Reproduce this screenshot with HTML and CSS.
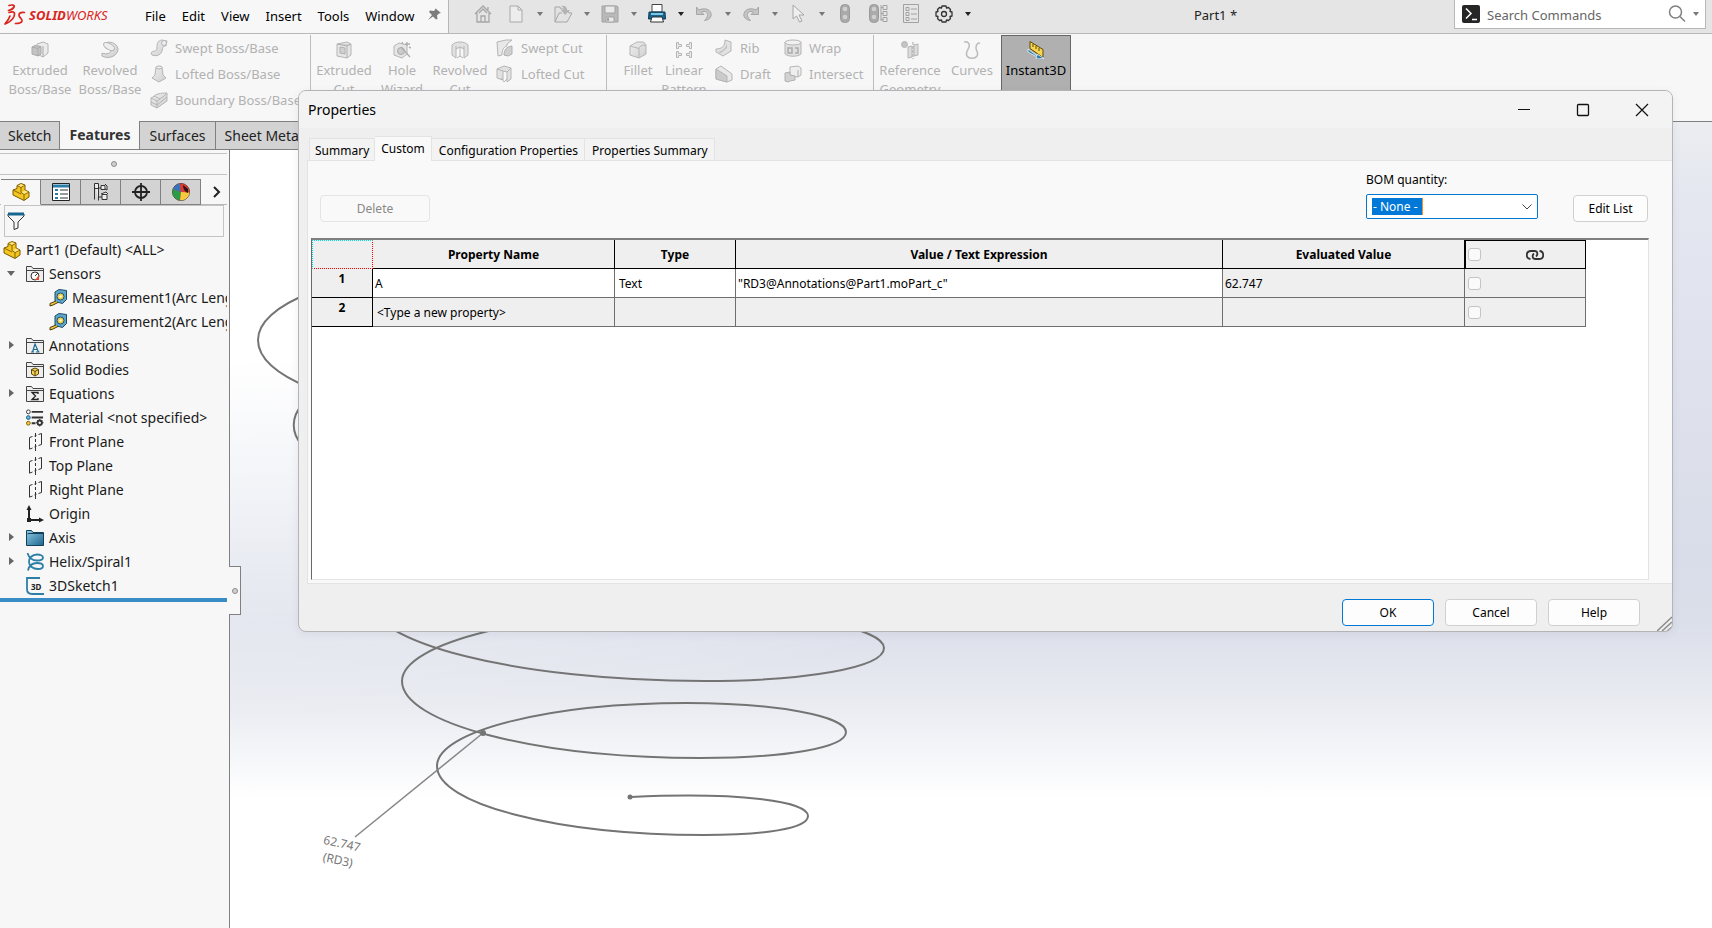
FILE: index.html
```html
<!DOCTYPE html>
<html lang="en">
<head>
<meta charset="utf-8">
<title>Part1 - SOLIDWORKS</title>
<link rel="stylesheet" href="styles.css">
</head>
<body>
<svg class="defs" aria-hidden="true">
  <defs>
    <linearGradient id="g-blue" x1="0" y1="0" x2="1" y2="1"><stop offset="0" stop-color="#8fcbe6"/><stop offset="1" stop-color="#1d658c"/></linearGradient>
    <linearGradient id="g-gray" x1="0" y1="0" x2="1" y2="1"><stop offset="0" stop-color="#efefef"/><stop offset="1" stop-color="#cfcfcf"/></linearGradient>
    <symbol id="part" viewBox="0 0 18 18"><path d="M1 7l4-1.500V2.500L9 .500l4 1.500v5l4 2v5l-5 3.500L1 12z" fill="#f3c520" stroke="#7a5a00" stroke-linejoin="round"/><path d="M5 2.500l4 2v5l3 2 5-2.500M9 4.500L13 2M12 11.500V17M1 7l8 4" fill="none" stroke="#8a6700"/><path d="M6 2.500l3-1.300 3 1-3 1.500zM10 9l3-1.500 3 1.500-4 2z" fill="#ffe68a"/></symbol>
    <symbol id="folder" viewBox="0 0 18 18"><path d="M.5 16.500v-15h5l1.500 2h10.500v13z" fill="#eee" stroke="#444"/><path d="M1 5.500h16" stroke="#444"/></symbol>
    <symbol id="tape" viewBox="0 0 18 18"><path d="M6 3l4-2.500 7.500 1v9l-4 4-7.500-2z" fill="#5ba7cb" stroke="#1c4a66"/><circle cx="11.500" cy="7.500" r="3.500" fill="#f4d04a" stroke="#234f69"/><circle cx="11.500" cy="7.500" r="1.200" fill="#fff7cf"/><path d="M7 12l-6 2.500V17l3-1 5-2.500" fill="#f1c73b" stroke="#4d3b0a"/></symbol>
    <symbol id="plane" viewBox="0 0 18 18"><path d="M3.500 16.200V4.500l3-1M8.500 3l2-.700M12.500 1.500l3-1v11l-3 1M10.500 13.200l-2 .700M6.500 15l-3 1.200" fill="none" stroke="#333"/><path d="M9.500 0v4M9.500 6v3M9.500 11v2M9.500 14v4" stroke="#333"/></symbol>
    <symbol id="box" viewBox="0 0 18 18"><path d="M1 5l7-4h6c2 1 3 2 3 4v8l-7 4-9-3z" fill="url(#g-gray)" stroke="#b5b5b5"/><path d="M1 5l9 2.500V17M10 7.500c1-3 4-4 7-3" fill="none" stroke="#b5b5b5"/></symbol>
  </defs>
</svg>

<header class="appbar">
  <div class="brand-menu">
    <div class="brand">
      <svg width="22" height="22" viewBox="0 0 22 22" fill="none" stroke="#d9261c" stroke-width="1.700" stroke-linecap="round" stroke-linejoin="round"><path d="M5 1.500c3-1 6-.500 5 1.500S6.500 6 4.500 6.500"/><path d="M5 8.500c5-1.500 6.500 0 5 4-1.500 3.500-5 6-9 7.500 2.500-3 4-5 5-8"/><path d="M20.500 8.500c-3.500-.500-6 .500-5.500 3s3.500 3 3 5.500c-.500 2-3 2.500-6.500 2.500"/></svg>
      <span class="wordmark"><b>SOLID</b>WORKS</span>
    </div>
    <nav class="menus">
      <button>File</button><button>Edit</button><button>View</button><button>Insert</button><button>Tools</button><button>Window</button>
    </nav>
    <svg width="15" height="15" viewBox="0 0 15 15"><path d="M8 1l6 5-2 .500-2 2 .500 3.500-1.500.500-3-3L1 13l4-5-3-3 1-1.500 4 .500 1.500-2z" fill="#7c7c7c"/></svg>
  </div>
  <div class="quickbar">
    <button class="solo" aria-label="Home"><svg width="18" height="18" viewBox="0 0 18 18" fill="none" stroke="#a6a6a6" stroke-width="1.300"><path d="M1 9l8-8 8 8M3 8v9h12V8M5 8l4-4 4 4M7 17v-6h4v6M14 2v3"/></svg></button>
    <button aria-label="New"><svg width="14" height="18" viewBox="0 0 14 18"><path d="M1 1h8l4 4v12H1z" fill="#ededed" stroke="#a9a9a9"/><path d="M9 1v4h4" fill="none" stroke="#a9a9a9"/></svg></button><button class="caret" aria-label="New options"></button>
    <button aria-label="Open"><svg width="19" height="18" viewBox="0 0 19 18"><path d="M1 17V2h5l1 2h3M1 17h12l5-9h-3l-1-2M1 17l4-9h3" fill="#e2e2e2" stroke="#a6a6a6"/><path d="M7 1c4-1 6 1 6 4h3l-5 5-4-5h3c0-2-1-3-3-4z" fill="#b4b4b4"/></svg></button><button class="caret" aria-label="Open options"></button>
    <button aria-label="Save"><svg width="18" height="18" viewBox="0 0 18 18"><path d="M1 1h15l1 1v15H1z" fill="#b9b9b9" stroke="#a2a2a2"/><path d="M4 1h10v7H4zM5 12h8v5H5z" fill="#e9e9e9" stroke="#a2a2a2"/><path d="M7 13v3" stroke="#a2a2a2" stroke-width="2"/></svg></button><button class="caret" aria-label="Save options"></button>
    <button aria-label="Print"><svg width="18" height="19" viewBox="0 0 18 19"><path d="M4 .500h10V8H4z" fill="#fff" stroke="#444"/><path d="M1 8h16l.500 7H.500z" fill="#17658f" stroke="#0d3c56"/><path d="M3 10h12" stroke="#9fdcf5" stroke-width="1.600"/><path d="M4 13h10l1.500 5h-13z" fill="#fff" stroke="#333"/></svg></button><button class="caret dark" aria-label="Print options"></button>
    <button aria-label="Undo"><svg width="18" height="18" viewBox="0 0 18 18"><path d="M1.500 2v7.500H9L6.500 7C10 5.500 13 7 12.500 10.500c-.300 2-1.500 3.500-3 5C14 15 17 12 16 8.500 15 4 9 2.500 4 5z" fill="#c4c4c4" stroke="#a6a6a6"/></svg></button><button class="caret" aria-label="Undo options"></button>
    <button aria-label="Redo"><svg width="18" height="18" viewBox="0 0 18 18"><path d="M16.500 2v7.500H9L11.500 7C8 5.500 5 7 5.500 10.500c.300 2 1.500 3.500 3 5C4 15 1 12 2 8.500 3 4 9 2.500 14 5z" fill="#c4c4c4" stroke="#a6a6a6"/></svg></button><button class="caret" aria-label="Redo options"></button>
    <button aria-label="Select"><svg width="13" height="19" viewBox="0 0 13 19"><path d="M1 1v14l3.500-3 3 6 2.500-1-3-6h5z" fill="#efefef" stroke="#a6a6a6"/></svg></button><button class="caret" aria-label="Select options"></button>
    <button class="solo" aria-label="Rebuild"><svg width="10" height="19" viewBox="0 0 10 19"><rect x=".500" y=".500" width="9" height="18" rx="4" fill="#aaa" stroke="#999"/><circle cx="5" cy="5" r="2.300" fill="#d0d0d0"/><circle cx="5" cy="13" r="2.300" fill="#d0d0d0"/></svg></button>
    <button class="solo" aria-label="Rebuild all"><svg width="19" height="19" viewBox="0 0 19 19"><rect x=".500" y=".500" width="9" height="18" rx="4" fill="#aaa" stroke="#999"/><circle cx="5" cy="5" r="2.300" fill="#d0d0d0"/><circle cx="5" cy="13" r="2.300" fill="#d0d0d0"/><path d="M14 1.500h4v4h-4zM14 7.500h4v4h-4zM14 13.500h4v4h-4zM12 1v16M12 3.500h2M12 9.500h2M12 15.500h2" fill="none" stroke="#a2a2a2"/></svg></button>
    <button class="solo" aria-label="File properties"><svg width="16" height="19" viewBox="0 0 16 19" fill="none" stroke="#a2a2a2"><path d="M.500.500h15v18H.500zM3 3.500h3v3H3zM3 8.500h3v3H3zM3 13.500h3v3H3zM8 5h6M8 10h6M8 15h6"/></svg></button>
    <button aria-label="Options"><svg width="18" height="18" viewBox="0 0 18 18" fill="none" stroke="#333" stroke-width="1.300"><path d="M7 1h4l.500 2 2-.500 2 2-.500 2 2 .500v4l-2 .500.500 2-2 2-2-.500L11 17H7l-.500-2-2 .500-2-2 .500-2L1 11V7l2-.500-.500-2 2-2 2 .500z" stroke-linejoin="round"/><circle cx="9" cy="9" r="2.500"/></svg></button><button class="caret dark" aria-label="More options"></button>
  </div>
  <div class="doc-title">Part1 *</div>
  <div class="search">
    <svg width="18" height="18" viewBox="0 0 18 18"><rect width="18" height="18" rx="2" fill="#262626"/><path d="M4 3.500l5 5-5 5M10 14.500h5" fill="none" stroke="#fff" stroke-width="1.500"/></svg>
    <input type="text" placeholder="Search Commands" aria-label="Search Commands">
    <svg width="18" height="18" viewBox="0 0 18 18" fill="none" stroke="#808080" stroke-width="1.500"><circle cx="7.500" cy="7" r="6"/><path d="M12 11.500l5 5"/></svg>
    <button class="caret" aria-label="Search options"></button>
  </div>
</header>

<section class="ribbon">
  <div class="group">
    <button class="big"><svg width="18" height="18" viewBox="0 0 18 18"><path d="M6 3l6-2 5 2v9l-5 4-6-3z" fill="#ececec" stroke="#b5b5b5"/><path d="M1 6l3-1.500 6 1V13l-3 2-6-2z" fill="#c4c4c4" stroke="#aaa"/><path d="M1 6l6 1.500 3-2M7 7.500V15M12 5v11" fill="none" stroke="#aaa"/></svg><span>Extruded<br>Boss/Base</span></button>
    <button class="big"><svg width="18" height="18" viewBox="0 0 18 18"><path d="M3 3c5-4 13-1 14 5 0 6-8 11-16 7v-3c5 2 9 0 9-3z" fill="url(#g-gray)" stroke="#b0b0b0"/><ellipse cx="8" cy="5.500" rx="6" ry="3" transform="rotate(30 8 5.500)" fill="#eee" stroke="#b0b0b0"/></svg><span>Revolved<br>Boss/Base</span></button>
    <div class="stack">
      <button><svg width="18" height="18" viewBox="0 0 18 18"><path d="M1 14c2-3 6-1 6-5s0-7 5-8l5 1-1 5c-4 0-3 2-4 5s-4 6-10 4z" fill="url(#g-gray)" stroke="#b5b5b5"/><circle cx="14" cy="4" r="2.500" fill="#eee" stroke="#b5b5b5"/></svg>Swept Boss/Base</button>
      <button><svg width="18" height="18" viewBox="0 0 18 18"><path d="M6 2h6l1 8 3 3-7 4-7-4 3-3z" fill="url(#g-gray)" stroke="#b5b5b5"/><ellipse cx="9" cy="2.500" rx="3" ry="1.500" fill="#eee" stroke="#b5b5b5"/></svg>Lofted Boss/Base</button>
      <button><svg width="18" height="18" viewBox="0 0 18 18"><path d="M1 7c3-1 3-3 7-4s5-1 9-1v8l-10 7-6-3z" fill="url(#g-gray)" stroke="#b5b5b5"/><path d="M1 7l6 3c3-1 3-3 6-4l4-4M7 10v7M4 5l6 3M1 11l6 3 10-8" fill="none" stroke="#b5b5b5"/></svg>Boundary Boss/Base</button>
    </div>
  </div>
  <div class="group">
    <button class="big wide"><svg width="18" height="18" viewBox="0 0 18 18"><path d="M2 3l10-2 4 2v11l-4 3-10-2z" fill="#e6e6e6" stroke="#b5b5b5"/><path d="M12 5v12M2 3l10 2 4-2M5 6l5 1v6l-5-1z" fill="#d0d0d0" stroke="#b0b0b0"/></svg><span>Extruded<br>Cut</span></button>
    <button class="big slim"><svg width="18" height="18" viewBox="0 0 18 18"><path d="M1 5l5-3 8 2v9l-5 4-8-3z" fill="#e6e6e6" stroke="#b5b5b5"/><circle cx="8" cy="10" r="3.500" fill="#ccc" stroke="#aaa"/><path d="M17 16L8 6M14 1v4M12 3h5M16 6l2 1M9 1l1 2" stroke="#b0b0b0" stroke-width="1.400"/></svg><span>Hole<br>Wizard</span></button>
    <button class="big wide"><svg width="18" height="18" viewBox="0 0 18 18"><path d="M1 4c3-4 13-4 16 0v10l-4 3V8l-4-2-4 2v9l-4-3z" fill="#e2e2e2" stroke="#b5b5b5"/><path d="M5 8V5M13 8V5M9 6v9l3 2M9 15l-3 2" fill="none" stroke="#b5b5b5"/></svg><span>Revolved<br>Cut</span></button>
    <div class="stack">
      <button><svg width="18" height="18" viewBox="0 0 18 18"><path d="M1 3l9-2h6l-5 4v2c-4 1-5 5-5 9l-4 1z" fill="#e8e8e8" stroke="#b5b5b5"/><path d="M8 16c0-5 2-8 8-9v8l-4 2z" fill="#cfcfcf" stroke="#b0b0b0"/></svg>Swept Cut</button>
      <button><svg width="18" height="18" viewBox="0 0 18 18"><path d="M1 4l7-3 7 2v11l-4 3V7L7 6v9l-6-2z" fill="#e2e2e2" stroke="#b5b5b5"/><path d="M7 6l-6-2M11 7l4-4M5 13l3 4 3-3" fill="none" stroke="#b5b5b5"/></svg>Lofted Cut</button>
    </div>
  </div>
  <div class="group">
    <button class="big slim"><svg width="18" height="18"><use href="#box"/></svg><span>Fillet</span></button>
    <button class="big mini"><svg width="18" height="18" viewBox="0 0 18 18" fill="#ececec" stroke="#b5b5b5"><path d="M1.500 1.500h2v2h3v2h-3v2h-2zM16.500 1.500h-2v2h-3v2h3v2h2zM1.500 10.500h2v2h3v2h-3v2h-2zM16.500 10.500h-2v2h-3v2h3v2h2z"/></svg><span>Linear<br>Pattern</span></button>
    <div class="stack short">
      <button><svg width="18" height="18" viewBox="0 0 18 18"><path d="M10 1l6 2v9l-8 5-7-4v-3c6 0 9-3 9-9z" fill="#e2e2e2" stroke="#b5b5b5"/><path d="M12 4v5l-6 5-3-1c5-1 8-4 9-9z" fill="#bebebe"/></svg>Rib</button>
      <button><svg width="18" height="18" viewBox="0 0 18 18"><path d="M1 4l5-3 11 8v6l-5 2-11-3z" fill="#e8e8e8" stroke="#b5b5b5"/><path d="M1 4l11 7v6L1 14z" fill="#cbcbcb" stroke="#b5b5b5"/></svg>Draft</button>
    </div>
    <div class="stack">
      <button><svg width="18" height="18" viewBox="0 0 18 18"><path d="M1 3v12c3 3 13 3 16 0V3z" fill="#e0e0e0" stroke="#b5b5b5"/><ellipse cx="9" cy="3.500" rx="8" ry="2.500" fill="#f0f0f0" stroke="#b5b5b5"/><path d="M4 9h4v5H4zM11 9h3v5h-3" fill="none" stroke="#aaa" stroke-width="1.500"/></svg>Wrap</button>
      <button><svg width="18" height="18" viewBox="0 0 18 18"><path d="M6 2l8-1 3 2v7l-3 2-8-1z" fill="#eee" stroke="#b5b5b5"/><path d="M1 8l5-1v3l5 1v4l-5 1-2 1-3-1zM14 5v7" fill="#d2d2d2" stroke="#b0b0b0"/></svg>Intersect</button>
    </div>
  </div>
  <div class="group">
    <button class="big"><svg width="18" height="18" viewBox="0 0 18 18"><circle cx="3.500" cy="3.500" r="3" fill="#c4c4c4" stroke="#b5b5b5"/><path d="M7 6l4-1v11l-4 1zM13 4l4-1v11l-4 1z" fill="#dcdcdc" stroke="#b5b5b5"/><path d="M12 1v17" stroke="#a5a5a5" stroke-dasharray="3 1"/></svg><span>Reference<br>Geometry</span></button>
    <button class="big slim"><svg width="18" height="18" viewBox="0 0 18 18" fill="none" stroke="#bcbcbc" stroke-width="1.500"><path d="M1 1c4-1 6 2 5 5s-4 6-2 9 8 3 10 0-1-5-1-8 1-5 4-5"/></svg><span>Curves</span></button>
  </div>
  <button class="big pressed"><svg width="18" height="18" viewBox="0 0 18 18"><path d="M3 .500l13 8v8l-13-9z" fill="#f8d64e" stroke="#5b470a"/><path d="M6 3v3M9 5v3M12 7v3" stroke="#5b470a"/><path d="M1 8l9 7v-2l7 4.500-8 .500 1-2-9-5z" fill="#2c7aa6" stroke="#e8f4fa" stroke-width=".800"/></svg><span>Instant3D</span></button>
</section>

<main class="workspace">
  <svg class="model" width="1482" height="806" viewBox="230 122 1482 806" fill="none">
    <g stroke="#747474" stroke-width="2">
      <path d="M310 293C276 306 258 323 258 340C258 358 276 374 310 388"/>
      <path d="M302 405C291 417 291 433 302 445"/>
      <path d="M367 597C367 643 518 681 704 681C804 681 884 668 884 648C884 628 792 611 687 611C530 611 402 643 402 681C402 723 535 758 700 758C784 758 846 748 846 732C846 716 775 703 687 703C550 703 437 731 437 766C437 804 557 835 704 835C762 835 808 829 808 816C808 801 739 792 631 797"/>
    </g>
    <path d="M483 733L355 837" stroke="#858585" stroke-width="1.500"/>
    <circle cx="483" cy="733" r="3" fill="#747474"/><circle cx="630" cy="797" r="2.500" fill="#747474"/>
    <g class="dimension" transform="rotate(12 324 843)"><text x="323" y="844">62.747</text><text x="326" y="861">(RD3)</text></g>
  </svg>
  <div class="left-column">
    <nav class="cm-tabs">
      <button>Sketch</button><button class="current">Features</button><button>Surfaces</button><button>Sheet Metal</button>
    </nav>
    <aside class="manager">
      <div class="splitter"><i class="dot"></i></div>
      <div class="manager-tabs">
        <button class="current" aria-label="Feature tree"><svg width="18" height="18"><use href="#part"/></svg></button>
        <button aria-label="Property manager"><svg width="18" height="18" viewBox="0 0 18 18"><path d="M.500.500h17v17H.500z" fill="#fff" stroke="#222"/><path d="M1 3h16" stroke="#2a7da8" stroke-width="3"/><path d="M3 6h3v2H3zM3 10h3v2H3zM3 14h3v2H3z" fill="#2a7da8"/><path d="M8 7h8M8 11h8M8 15h8" stroke="#333"/></svg></button>
        <button aria-label="Configurations"><svg width="16" height="18" viewBox="0 0 16 18" fill="#eee" stroke="#333"><path d="M1.500.500h4v17M1.500.500v16M1 5.500h4M5 5h3M5 14h4M8 2.500h4v4H8zM9 11.500h5v5H9zM12 1l2 2v4l-2-1M8 11l5-2 2 2"/></svg></button>
        <button aria-label="Dimensions"><svg width="18" height="18" viewBox="0 0 18 18" fill="none" stroke="#222" stroke-width="1.800"><circle cx="9" cy="9" r="6"/><path d="M9 0v18M0 9h18"/></svg></button>
        <button aria-label="Appearances"><svg width="18" height="18" viewBox="0 0 18 18"><circle cx="9" cy="9" r="8.500" fill="#e2392b" stroke="#444"/><path d="M9 9L1 6c-2 6 2 11 7 11z" fill="#2e9b46"/><path d="M9 9l-1 8.500c5 0 9-3 9.500-8z" fill="#f5c93b"/><path d="M9 9L1 6C3 2 6 1 8 .500z" fill="#3675bd"/><path d="M9 9L8 .500C13 0 17 4 17.500 9z" fill="#e2392b"/><path d="M11 2l5 4v4c-3-1-5-4-5-8z" fill="#2b1717"/></svg></button>
        <button class="more" aria-label="More"><svg width="8" height="12" viewBox="0 0 8 12" fill="none" stroke="#222" stroke-width="2"><path d="M1 1l5 5-5 5"/></svg></button>
      </div>
      <div class="filter">
        <svg width="18" height="18" viewBox="0 0 18 18"><path d="M1 2h16v2l-6 6v6l-4 1.500V10L1 4z" fill="#f5f5f5" stroke="#333"/><path d="M1 2h16" stroke="#17658f" stroke-width="3"/></svg>
        <input type="text" aria-label="Filter tree">
      </div>
      <ul class="tree">
        <li class="root"><svg width="18" height="18"><use href="#part"/></svg>Part1 (Default) &lt;ALL&gt;</li>
        <li><i class="arrow open"></i><svg width="18" height="18"><use href="#folder"/><circle cx="9" cy="11" r="4" fill="#fff" stroke="#333"/><path d="M9 11l3-3" stroke="#333"/><path d="M9 15h4v-5z" fill="#e04a2a"/></svg>Sensors</li>
        <li class="child"><svg width="18" height="18"><use href="#tape"/></svg>Measurement1(Arc Length)</li>
        <li class="child"><svg width="18" height="18"><use href="#tape"/></svg>Measurement2(Arc Length)</li>
        <li><i class="arrow"></i><svg width="18" height="18"><use href="#folder"/><path d="M5 15h3M10 15h3.500M6.500 15L9 7l3.500 8M7.500 12.500h4" fill="none" stroke="#1e6a94" stroke-width="1.200"/></svg>Annotations</li>
        <li><svg width="18" height="18"><use href="#folder"/><path d="M5.500 8.500l3.500-1.500 3.500 1.500v4.500L9 15l-3.500-2z" fill="#f4cf56" stroke="#5b470a"/><path d="M5.500 8.500L9 10.500l3.500-2M9 10.500V15" fill="none" stroke="#5b470a"/></svg>Solid Bodies</li>
        <li><i class="arrow"></i><svg width="18" height="18"><use href="#folder"/><path d="M12 9V7.500H6L9.500 11 6 14.500h6V13" fill="none" stroke="#222" stroke-width="1.300"/></svg>Equations</li>
        <li><svg width="18" height="18" viewBox="0 0 19 18"><circle cx="2.500" cy="2.500" r="2" fill="#fff" stroke="#333"/><circle cx="2.500" cy="8.500" r="2" fill="#58b5df" stroke="#1c5a7c"/><circle cx="2.500" cy="14.500" r="2" fill="#f5c93b" stroke="#7d5c06"/><path d="M6 2.500h12M6 8.500h12M6 14.500h4" stroke="#333" stroke-width="2"/><circle cx="14.500" cy="14" r="2.300" fill="none" stroke="#333" stroke-width="2"/><path d="M14.500 10v8M10.500 14h8M12 11.500l5 5M17 11.500l-5 5" stroke="#333" stroke-dasharray="2 4"/></svg>Material &lt;not specified&gt;</li>
        <li><svg width="18" height="18"><use href="#plane"/></svg>Front Plane</li>
        <li><svg width="18" height="18"><use href="#plane"/></svg>Top Plane</li>
        <li><svg width="18" height="18"><use href="#plane"/></svg>Right Plane</li>
        <li><svg width="18" height="18" viewBox="0 0 18 18"><path d="M3 3v12h12" fill="none" stroke="#222" stroke-width="2"/><path d="M3 0l2.500 5h-5zM18 15l-5-2.500v5z" fill="#222"/><path d="M1 13h4v4H1z" fill="#222"/></svg>Origin</li>
        <li><i class="arrow"></i><svg width="18" height="18" viewBox="0 0 18 18"><path d="M.500 16.500v-15h5l1.500 2h10.500v13z" fill="url(#g-blue)" stroke="#123f59"/><path d="M1 5.500l1-1h15" fill="none" stroke="#123f59"/></svg>Axis</li>
        <li><i class="arrow"></i><svg width="18" height="18" viewBox="0 0 18 18" fill="none" stroke="#2d7fa8" stroke-width="1.800"><path d="M1.500 0C3 5 6 7.500 11 7.500c4 0 6-1 6-3S14 1.500 11 1.500C6 1.500 3 5 3 9c0 4 4 7 9 7 3 0 5-1 5-3s-3-3-6-3c-5 0-8 3-9 7.500"/></svg>Helix/Spiral1</li>
        <li><svg width="18" height="18" viewBox="0 0 18 18"><path d="M14 1H1v11c0 3 2 5 5 5h12" fill="none" stroke="#2d7fa8" stroke-width="1.800"/><text x="5" y="13" class="tiny">3D</text></svg>3DSketch1</li>
      </ul>
      <div class="rollback"></div>
      <button class="collapse" aria-label="Collapse panel"><i class="dot"></i></button>
    </aside>
  </div>
</main>

<section class="dialog" role="dialog" aria-labelledby="dlg-title">
  <header class="dlg-head">
    <h1 id="dlg-title">Properties</h1>
    <button aria-label="Minimize"><svg width="14" height="14" viewBox="0 0 14 14"><path d="M1 6.500h12" stroke="#111"/></svg></button>
    <button aria-label="Maximize"><svg width="14" height="14" viewBox="0 0 14 14"><rect x="1.500" y="1.500" width="11" height="11" rx="1" fill="none" stroke="#111" stroke-width="1.300"/></svg></button>
    <button aria-label="Close"><svg width="14" height="14" viewBox="0 0 14 14"><path d="M1 1l12 12M13 1L1 13" stroke="#111" stroke-width="1.200"/></svg></button>
  </header>
  <nav class="dlg-tabs" role="tablist">
    <button role="tab">Summary</button><button role="tab" class="current" aria-selected="true">Custom</button><button role="tab">Configuration Properties</button><button role="tab">Properties Summary</button>
  </nav>
  <div class="dlg-page">
    <div class="controls">
      <button class="push delete" disabled>Delete</button>
      <div class="field">
        <label for="bom">BOM quantity:</label>
        <span class="combo">
          <select id="bom"><option>- None -</option></select>
          <svg width="10" height="6" viewBox="0 0 10 6" fill="none" stroke="#444"><path d="M.500.500L5 5 9.500.500"/></svg>
        </span>
      </div>
      <button class="push edit">Edit List</button>
    </div>
    <div class="grid-pane">
      <table class="grid">
        <colgroup><col class="c-num"><col class="c-half"><col class="c-quarter"><col class="c-value"><col class="c-half"><col class="c-quarter"></colgroup>
        <thead><tr><th class="corner"></th><th>Property Name</th><th>Type</th><th>Value / Text Expression</th><th>Evaluated Value</th>
          <th class="link"><div><input type="checkbox" aria-label="Link all"><svg width="18" height="10" viewBox="0 0 18 10" fill="none" stroke="#333" stroke-width="1.800"><path d="M4.500 9C-.500 8.500-.500 1 5 1h3.500c3.500 0 3.500 4 1.500 5.500M13.500 1c5 .500 5 8-.500 8H9.500C6 9 6 5 8 3.500"/></svg></div></th></tr></thead>
        <tbody>
          <tr class="filled"><th>1</th><td>A</td><td class="type">Text</td><td>"RD3@Annotations@Part1.moPart_c"</td><td class="shade">62.747</td><td class="shade check"><input type="checkbox" aria-label="Link row 1"></td></tr>
          <tr><th>2</th><td class="new">&lt;Type a new property&gt;</td><td></td><td></td><td></td><td class="check"><input type="checkbox" aria-label="Link row 2"></td></tr>
        </tbody>
      </table>
    </div>
  </div>
  <footer class="dlg-foot">
    <button class="push default">OK</button><button class="push">Cancel</button><button class="push">Help</button>
  </footer>
  <svg class="grip" width="15" height="15" viewBox="0 0 15 15" stroke="#8f8f8f" stroke-width="1.600"><path d="M0 15L15 1M5 15L15 6M10 15l5-4"/></svg>
</section>
</body>
</html>
```
FILE: styles.css
```css
* { box-sizing: border-box; }
html, body { height: 100%; }
body {
  margin: 0;
  display: flex;
  flex-direction: column;
  position: relative;
  overflow: hidden;
  background: #f7f7f7;
  color: #1a1a1a;
  font: 13px/18px "Noto Sans", "Open Sans", sans-serif;
}
button, input, select { font: inherit; color: inherit; margin: 0; padding: 0; border: 0; background: none; }
svg { flex: none; }
.defs { position: absolute; width: 0; height: 0; }
.dot { display: block; width: 6px; height: 6px; border-radius: 50%; background: #d0d0d0; border: 1px solid #8c8c8c; }

/* Application bar */
.appbar { display: flex; height: 34px; flex: none; background: #e5e5e5; border-bottom: 1px solid #b8b8b8; }
.brand-menu { display: flex; align-items: center; width: 449px; padding: 0 6px 4px 4px; background: #f7f7f7; border-right: 1px solid #b8b8b8; color: #000; }
.brand { display: flex; align-items: center; gap: 3px; width: 141px; }
.wordmark { color: #d9261c; font-style: italic; }
.menus { display: flex; gap: 16px; margin-right: auto; padding-top: 2px; }
.quickbar { display: flex; align-items: center; padding: 0 0 6px 20px; }
.quickbar button { display: flex; align-items: center; justify-content: center; width: 28px; height: 24px; }
.quickbar .solo { margin-right: 5px; }
.quickbar .caret { width: 19px; }
.caret::before { content: ""; display: block; border: solid transparent; border-width: 4px 3px 0; border-top-color: #777; }
.caret.dark::before { border-top-color: #222; }
.doc-title { flex: 1; text-align: center; padding-top: 6px; color: #222; }
.search { display: flex; align-items: center; width: 252px; height: 29px; margin-right: 6px; padding: 0 4px 0 7px; background: #fff; border: 1px solid #b8b8b8; border-top: 0; }
.search input { flex: 1; min-width: 0; padding: 2px 7px 0; outline: 0; }
.search input::placeholder { color: #666; opacity: 1; }
.search .caret { margin-left: 5px; padding: 4px 2px; }

/* Ribbon */
.ribbon { display: flex; height: 87px; flex: none; color: #b2b2b2; }
.group { display: flex; border-right: 1px solid #bdbdbd; margin-top: 1px; }
.group:nth-child(1) { width: 311px; padding-left: 5px; }
.group:nth-child(2) { width: 296px; padding-left: 2px; }
.group:nth-child(3) { width: 267px; padding-left: 4px; }
.group:nth-child(4) { width: 124px; margin-right: 3px; padding-left: 1px; border: 0; }
.big { display: flex; flex-direction: column; align-items: center; justify-content: flex-start; gap: 2px; flex: none; width: 70px; padding-top: 6px; line-height: 19px; text-align: center; }
.wide { width: 62px; }
.slim { width: 54px; }
.mini { width: 38px; }
.stack { display: flex; flex-direction: column; padding-left: 5px; }
.stack button { display: flex; align-items: center; gap: 7px; height: 26px; white-space: nowrap; }
.stack.short { width: 76px; padding-left: 12px; }
.pressed { background: #b0b0b0; border: 1px solid #666; color: #000; margin-top: 1px; padding-top: 5px; }

/* Workspace */
.workspace {
  flex: 1;
  min-height: 0;
  position: relative;
  border-top: 1px solid #808080;
  background:
    radial-gradient(ellipse 82% 74% at 12% 0, #fff 40%, rgba(255, 255, 255, 0) 100%),
    linear-gradient(#ecedf1 0, #e4e7f0 10%, #d9dde9 54%, #dbdfea 62%, #e9ebf1 72%, #fff 84%);
}
.model { position: absolute; right: 0; top: 0; }
.dimension { font-size: 12px; fill: #777; }
.left-column { position: relative; height: 100%; width: 310px; display: flex; flex-direction: column; }
.cm-tabs { display: flex; height: 28px; border-bottom: 1px solid #808080; font-size: 14px; white-space: nowrap; flex: none; }
.cm-tabs button { padding: 0 9px; background: #d3d3d3; border-right: 1px solid #808080; color: #222; }
.cm-tabs button:first-child { padding: 0 8px; }
.cm-tabs .current { background: #f7f7f7; font-weight: 700; margin-top: -1px; color: #333; }
.manager { position: relative; flex: 1; width: 230px; background: #f7f7f7; border-right: 1px solid #808080; padding-right: 2px; }
.splitter { display: flex; align-items: center; justify-content: center; height: 22px; margin-top: 3px; border: solid #c4c4c4; border-width: 1px 0; }
.manager-tabs { display: flex; height: 26px; margin-top: 4px; padding-left: 1px; border-bottom: 1px solid #b8b8b8; }
.manager-tabs button { display: flex; align-items: center; justify-content: center; width: 40px; height: 26px; background: #d3d3d3; border: solid #808080; border-width: 1px 1px 1px 0; }
.manager-tabs .current { background: #f7f7f7; border-bottom-color: #f7f7f7; }
.manager-tabs .more { width: 26px; padding-left: 5px; background: none; border: 0; }
.filter { display: flex; align-items: center; height: 32px; margin: 0 3px 0 4px; padding: 0 2px; border: 1px solid #c4c4c4; }
.filter input { flex: 1; min-width: 0; outline: 0; }
.tree { list-style: none; margin: 0; padding: 1px 0 0; font-size: 14px; overflow: hidden; }
.tree li { display: flex; align-items: center; gap: 5px; height: 24px; padding-left: 26px; position: relative; white-space: nowrap; }
.tree li.root { padding-left: 3px; }
.tree li.child { padding-left: 49px; }
.arrow { position: absolute; left: 9px; top: 7px; border: solid transparent; border-width: 4px 0 4px 5px; border-left-color: #666; }
.arrow.open { left: 7px; top: 9px; border-width: 5px 4px 0; border-color: #666 transparent transparent; }
.tiny { font-size: 8px; font-weight: 700; fill: #222; }
.rollback { height: 4px; background: #3a8cc4; }
.collapse { position: absolute; left: 229px; top: 416px; width: 12px; height: 49px; display: flex; align-items: center; justify-content: center; background: #f7f7f7; border: 1px solid #808080; border-left: 0; }

/* Properties dialog */
.dialog { position: absolute; left: 298px; right: 39px; top: 90px; background: #efefef; border: 1px solid #b4b4b8; border-radius: 8px; overflow: hidden; color: #000; font-size: 12px; box-shadow: 0 2px 8px rgba(60, 70, 100, .08); }
.dlg-head { display: flex; align-items: center; height: 37px; padding: 0 8px 0 9px; background: #f3f3f3; }
.dlg-head h1 { flex: 1; margin: 0; font-size: 14px; font-weight: 400; }
.dlg-head button { width: 44px; margin-left: 15px; height: 32px; display: flex; align-items: center; justify-content: center; }
.dlg-tabs { display: flex; align-items: flex-end; height: 32px; padding-left: 10px; }
.dlg-tabs button { height: 22px; padding: 2px 6px 0 7px; background: #f3f3f3; border: 1px solid #e3e3e3; border-width: 1px 1px 0 0; }
.dlg-tabs button:first-child { padding: 2px 5px 0; border-left-width: 1px; }
.dlg-tabs .current { height: 25px; margin-bottom: -1px; padding: 0 6px 1px; background: #f9f9f9; position: relative; }
.dlg-page { margin-left: 8px; padding: 0 23px 3px 3px; background: #f9f9f9; border: 1px solid #e3e3e3; border-right: 0; }
.controls { display: flex; align-items: flex-end; height: 77px; padding: 0 1px 16px 9px; }
.push { width: 92px; height: 27px; background: #fdfdfd; border: 1px solid #d0d0d0; border-radius: 4px; }
.push.delete { width: 110px; color: #888; background: #f9f9f9; border-color: #e5e5e5; }
.push.edit { width: 75px; }
.push.default { border-color: #0078d4; }
.field { display: flex; flex-direction: column; gap: 5px; margin: 0 35px 3px auto; }
.combo { position: relative; display: flex; }
.combo svg { position: absolute; right: 6px; top: 10px; pointer-events: none; }
.combo select {
  width: 172px; height: 25px; padding: 0 6px; appearance: none; color: #fff; border: 1px solid #0078d4; border-radius: 2px; outline: 0;
  background: linear-gradient(90deg, #0078d7 50px, #ff8c28 50px) 5px 3px / 51px 17px no-repeat #fff;
}
.grid-pane { min-height: 342px; background: #fff; border: 1px solid #e3e3e3; border-top: 2px solid #808080; border-left: 1px solid #696969; }
.grid { width: 1274px; table-layout: fixed; border-spacing: 0; }
.c-num { width: 61px; }
.c-quarter { width: 121px; }
.c-half { width: 242px; }
.c-value { width: 487px; }
.grid th, .grid td { height: 29px; padding: 2px 2px 0; background: #efefef; border: solid #6e6e6e; border-width: 0 1px 1px 0; line-height: 18px; text-align: left; }
.grid th { text-align: center; border-color: #000; }
.grid tbody th { vertical-align: top; padding: 1px 0 0; }
.grid .filled td { background: #fff; }
.grid .filled .shade { background: #efefef; }
.grid .type, .grid .new { padding-left: 4px; }
.grid .check { padding: 0 3px; }
.grid .corner { border: 1px dotted #00e0e0; border-right-color: red; border-bottom-color: red; }
.grid .link { padding: 0 2px; border-top: 1px solid #000; border-left: 1px solid #000; }
.link div { display: flex; align-items: center; }
.link svg { margin-left: 45px; }
.grid input { appearance: none; display: block; width: 13px; height: 13px; background: #fafafa; border: 1px solid #c4c4c4; border-radius: 3px; }
.dlg-foot { display: flex; justify-content: flex-end; gap: 11px; padding: 15px 32px 5px; }
.dlg-foot .push { padding-top: 1px; }
.grip { position: absolute; right: 0; bottom: 0; }
```
